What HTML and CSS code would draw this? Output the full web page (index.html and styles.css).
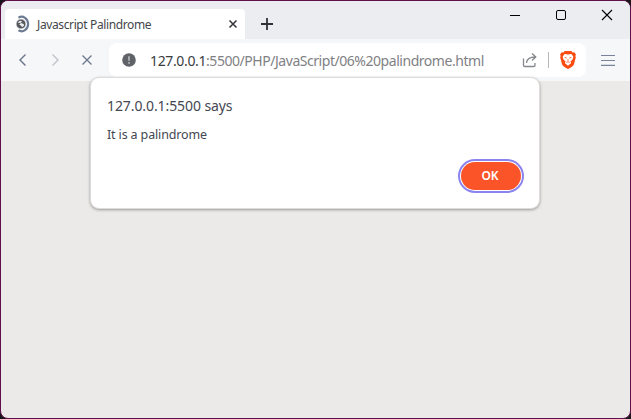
FILE: index.html
```html
<!DOCTYPE html>
<html lang="en">
<head>
<meta charset="utf-8">
<title>Javascript Palindrome</title>
<link rel="stylesheet" href="styles.css">
</head>
<body>
<div class="window">
  <header class="tabstrip">
    <div class="tab">
      <svg class="favicon" width="16" height="18" viewBox="0 0 16 18" fill="none">
        <path d="M3.500 2.700C8 0 13.100 3.600 13.100 9S8 18 3.500 15.300" stroke="#6b7b93" stroke-width="2.200"/>
        <circle cx="6" cy="9" r="4.900" fill="#55585c" stroke="#fff" stroke-width=".6"/>
        <path d="M2.600 7.400 5 5.800l2 .5-.8 1.300-1.700.5zM6 8l2.700 1.100.4 1.500-2 1.700-1-1.500L4.200 9.400z" fill="#eef0f2"/>
      </svg>
      <span class="tab-title">Javascript Palindrome</span>
      <svg class="tab-close" width="10" height="10" viewBox="0 0 10 10"><path d="M1.500 1.500l7 7M8.500 1.500l-7 7" stroke="#36393e" stroke-width="1.600"/></svg>
    </div>
    <svg class="new-tab" width="12" height="12" viewBox="0 0 12 12"><path d="M6 0v12M0 6h12" stroke="#303238" stroke-width="1.800"/></svg>
    <div class="controls">
      <svg width="12" height="12" viewBox="0 0 12 12"><path d="M1 6.500h10" stroke="#000"/></svg>
      <svg width="12" height="12" viewBox="0 0 12 12"><rect x="1.500" y="1.500" width="9" height="9" rx="1.500" fill="none" stroke="#000"/></svg>
      <svg width="12" height="12" viewBox="0 0 12 12"><path d="M1 1l10 10M11 1L1 11" stroke="#000" stroke-width="1.100"/></svg>
    </div>
  </header>
  <nav class="toolbar">
    <svg class="back" width="8" height="14" viewBox="0 0 8 14" fill="none"><path d="M6.500 1.500L1 7l5.500 5.500" stroke="#68738a" stroke-width="1.400"/></svg>
    <svg class="forward" width="8" height="14" viewBox="0 0 8 14" fill="none"><path d="M1.500 1.500L7 7l-5.500 5.500" stroke="#bfc2ca" stroke-width="1.400"/></svg>
    <svg class="stop" width="12" height="12" viewBox="0 0 12 12"><path d="M1.500 1.500l9 9M10.500 1.500l-9 9" stroke="#6d788e" stroke-width="1.300"/></svg>
    <div class="address">
      <svg class="info" width="14" height="14" viewBox="0 0 14 14"><circle cx="7" cy="7" r="6.800" fill="#5f6368"/><path d="M7 3.300v4.400M7 9v1.700" stroke="#bfc1c4" stroke-width="1.500"/></svg>
      <span class="url"><span class="host">127.0.0.1</span>:5500/PHP/JavaScript/06%20palindrome.html</span>
      <svg class="share" width="16" height="16" viewBox="0 0 16 16" fill="none" stroke="#85878c" stroke-width="1.300"><path d="M1.500 6.500v6.800q0 1.200 1.200 1.200h9.100q1.200 0 1.200-1.200V11"/><path d="M4.500 11C4.700 7.300 7.500 5 13.500 5M10 1.500 13.800 5 10 8.500"/></svg>
      <i class="divider"></i>
      <svg class="brave" width="16" height="18" viewBox="0 0 16 18"><path d="M4.800 0h6.400l1.500 1.500 1.600-.2 1.600 2.200-.5 1.500.4 1.500-2 7.200q-.5 1.500-5.800 4.300Q2.700 15.200 2.200 13.700L.2 6.500.6 5 .1 3.500l1.600-2.200 1.600.2z" fill="#fb4b10"/><path d="M4.500 3 8 3.500 11.500 3l1.900 2.700-1 3-2 1.800.8 1.500L8 14.700 4.800 12l.8-1.500-2-1.800-1-3z" fill="#fff"/><path d="M4.600 6.300l2.200.8M11.400 6.300l-2.200.8M8 8v2M6.200 11.500 8 10.600l1.800.9" fill="none" stroke="#fb5b28" stroke-width=".8"/></svg>
    </div>
    <svg class="menu" width="14" height="12" viewBox="0 0 14 12"><path d="M0 1.500h14M0 6.500h14M0 11.300h14" stroke="#76839a" stroke-width="1.200"/></svg>
  </nav>
  <main class="page"></main>
  <section class="dialog" role="dialog">
    <h1>127.0.0.1:5500 says</h1>
    <p>It is a palindrome</p>
    <button>OK</button>
  </section>
</div>
</body>
</html>
```
FILE: styles.css
```css
* { box-sizing: border-box; }
body { margin: 0; background: #18151b; font-family: "Noto Sans", sans-serif; }
svg { display: block; flex: none; }
.window {
  position: relative;
  display: flex;
  flex-direction: column;
  width: 631px;
  height: 419px;
  border: 1px solid #5f1048;
  border-radius: 8px;
  overflow: hidden;
  background: #ebeae8;
}
.tabstrip { display: flex; height: 38px; padding: 8px 17px 0 4px; background: #ecedf1; }
.tab { display: flex; align-items: center; width: 240px; height: 30px; padding: 0 7px 0 10px; background: #fff; border-radius: 4px 4px 0 0; }
.tab-title { margin-left: 6px; font-size: 12px; letter-spacing: -0.38px; color: #44464b; white-space: nowrap; }
.tab-close { margin-left: auto; }
.new-tab { margin: 9px 0 0 16px; }
.controls { display: flex; gap: 34px; margin-left: auto; }
.toolbar { display: flex; align-items: center; height: 42px; padding: 0 15px 0 18px; background: #f5f7f9; }
.forward { margin-left: 24px; }
.stop { margin-left: 22px; }
.address { display: flex; align-items: center; width: 477px; height: 34px; margin-left: 16px; padding: 0 10px 0 13px; background: #fff; border-radius: 8px; }
.url { margin-left: 14px; font-size: 14px; letter-spacing: -0.46px; color: #7f8185; white-space: nowrap; }
.host { letter-spacing: -0.36px; color: #3b3d41; }
.share { margin-left: auto; }
.divider { width: 1px; height: 16px; margin: 0 11px 0 10px; background: #b5b7bb; }
.menu { margin-left: auto; }
.page { flex: 1; }
.dialog {
  position: absolute;
  top: 76px;
  left: 89px;
  display: flex;
  flex-direction: column;
  width: 450px;
  height: 132px;
  padding: 17px 18px 18px 16px;
  border: 1px solid #dcdcdc;
  border-radius: 9px;
  background: #fff;
  box-shadow: 0 1px 3px rgba(0, 0, 0, .35);
}
.dialog h1, .dialog p { margin: 0; font-weight: 400; color: #444752; white-space: nowrap; }
.dialog h1 { font-size: 14px; line-height: 22px; letter-spacing: -0.09px; }
.dialog p { margin-top: 8px; font-size: 12.500px; line-height: 20px; letter-spacing: -0.14px; }
.dialog button {
  align-self: flex-end;
  width: 60px;
  height: 28px;
  margin-top: auto;
  border: 0;
  padding: 0 2px 1px 0;
  border-radius: 14px;
  background: #fc5429;
  box-shadow: 0 0 0 1px #fff, 0 0 0 3px #8b83ee;
  color: #fff;
  font: 600 12px "Noto Sans", sans-serif;
  letter-spacing: -0.2px;
}
```
